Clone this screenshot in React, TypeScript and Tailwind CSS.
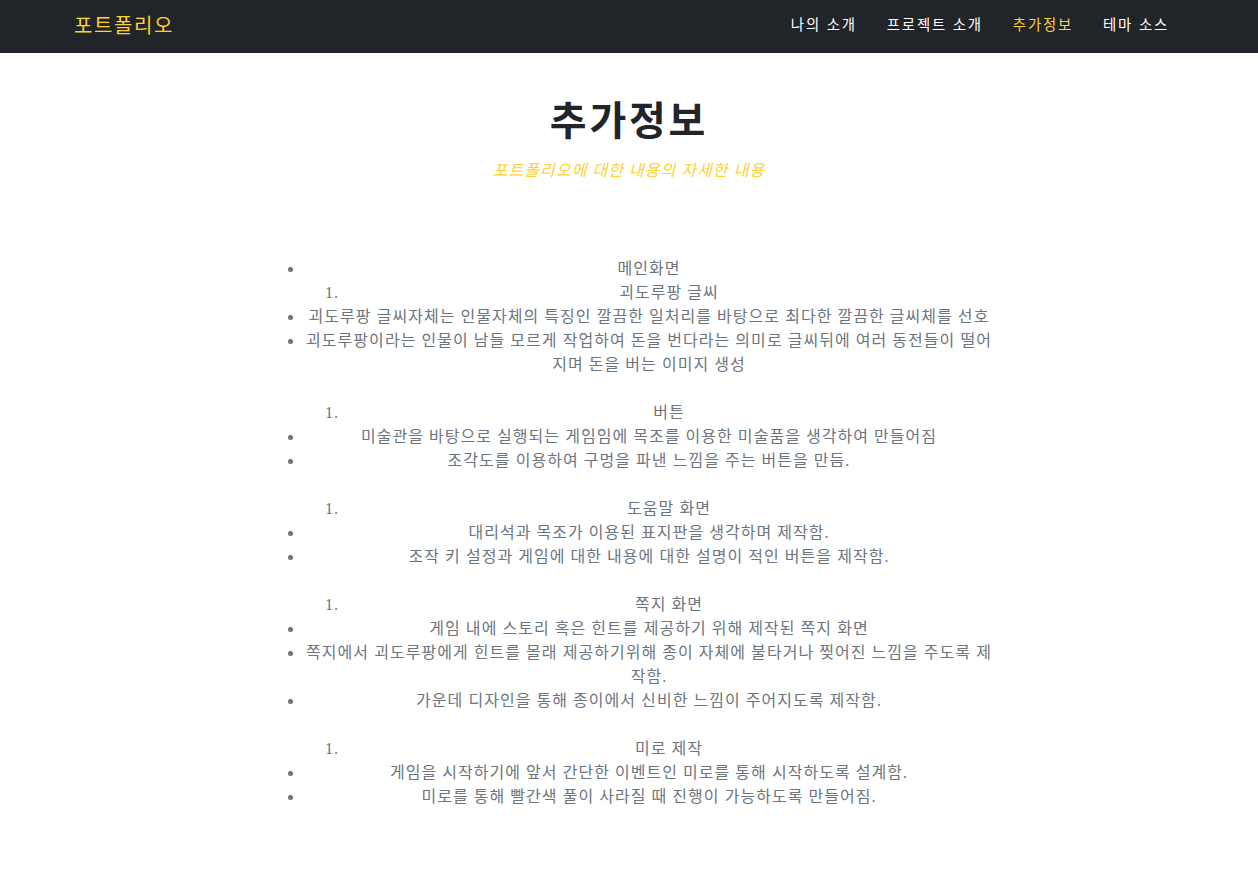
const navLinks = [
  { label: '나의 소개', active: false },
  { label: '프로젝트 소개', active: false },
  { label: '추가정보', active: true },
  { label: '테마 소스', active: false },
]

type Group = { title: string; items: string[] }

const groups: Group[] = [
  {
    title: '괴도루팡 글씨',
    items: [
      '괴도루팡 글씨자체는 인물자체의 특징인 깔끔한 일처리를 바탕으로 최다한 깔끔한 글씨체를 선호',
      '괴도루팡이라는 인물이 남들 모르게 작업하여 돈을 번다라는 의미로 글씨뒤에 여러 동전들이 떨어지며 돈을 버는 이미지 생성',
    ],
  },
  {
    title: '버튼',
    items: [
      '미술관을 바탕으로 실행되는 게임임에 목조를 이용한 미술품을 생각하여 만들어짐',
      '조각도를 이용하여 구멍을 파낸 느낌을 주는 버튼을 만듬.',
    ],
  },
  {
    title: '도움말 화면',
    items: [
      '대리석과 목조가 이용된 표지판을 생각하며 제작함.',
      '조작 키 설정과 게임에 대한 내용에 대한 설명이 적인 버튼을 제작함.',
    ],
  },
  {
    title: '쪽지 화면',
    items: [
      '게임 내에 스토리 혹은 힌트를 제공하기 위해 제작된 쪽지 화면',
      '쪽지에서 괴도루팡에게 힌트를 몰래 제공하기위해 종이 자체에 불타거나 찢어진 느낌을 주도록 제작함.',
      '가운데 디자인을 통해 종이에서 신비한 느낌이 주어지도록 제작함.',
    ],
  },
  {
    title: '미로 제작',
    items: [
      '게임을 시작하기에 앞서 간단한 이벤트인 미로를 통해 시작하도록 설계함.',
      '미로를 통해 빨간색 풀이 사라질 때 진행이 가능하도록 만들어짐.',
    ],
  },
]

export default function App() {
  return (
    <div className="min-h-[874px] bg-white font-['Liberation_Serif','Noto_Sans_CJK_KR',serif]">
      <nav className="h-[53px] bg-[#212529]">
        <div className="mx-auto flex h-full max-w-[1140px] items-center justify-between px-[15px]">
          <a className="-mt-[1px] text-[20px] leading-none tracking-[0.08em] text-[#fed136] font-['Liberation_Sans','Noto_Sans_CJK_KR',sans-serif]">
            포트폴리오
          </a>
          <ul className="flex items-center">
            {navLinks.map((link) => (
              <li key={link.label}>
                <a
                  className={`-mt-[1px] block px-[15px] text-[14.4px] tracking-[1.8px] font-['Liberation_Sans','Noto_Sans_CJK_KR',sans-serif] ${
                    link.active ? 'text-[#fed136]' : 'text-white'
                  }`}
                >
                  {link.label}
                </a>
              </li>
            ))}
          </ul>
        </div>
      </nav>

      <section className="pt-[44px] pb-16">
        <div className="mx-auto max-w-[1140px] px-[15px]">
          <div className="text-center">
            <h2 className="text-[40px] leading-[48px] font-bold tracking-[0.07em] text-[#212529] font-['Liberation_Sans','Noto_Sans_CJK_KR',sans-serif]">
              추가정보
            </h2>
            <h3 className="mt-[14px] text-[16px] leading-6 italic tracking-[0.065em] text-[#fed136]">
              포트폴리오에 대한 내용의 자세한 내용
            </h3>
          </div>

          <div className="mx-auto mt-[74px] w-[760px] px-[15px]">
            <ul className="list-disc pl-10 text-center text-[16px] leading-6 tracking-[0.065em] text-[#6c757d]">
              <li>메인화면</li>
              {groups.map((group, gi) => (
                <li key={group.title} className={`list-none ${gi > 0 ? 'mt-6' : ''}`}>
                  <ol className="list-decimal pl-10">
                    <li>{group.title}</li>
                  </ol>
                  <ul className="list-disc">
                    {group.items.map((item) => (
                      <li key={item}>{item}</li>
                    ))}
                  </ul>
                </li>
              ))}
            </ul>
          </div>
        </div>
      </section>
    </div>
  )
}
